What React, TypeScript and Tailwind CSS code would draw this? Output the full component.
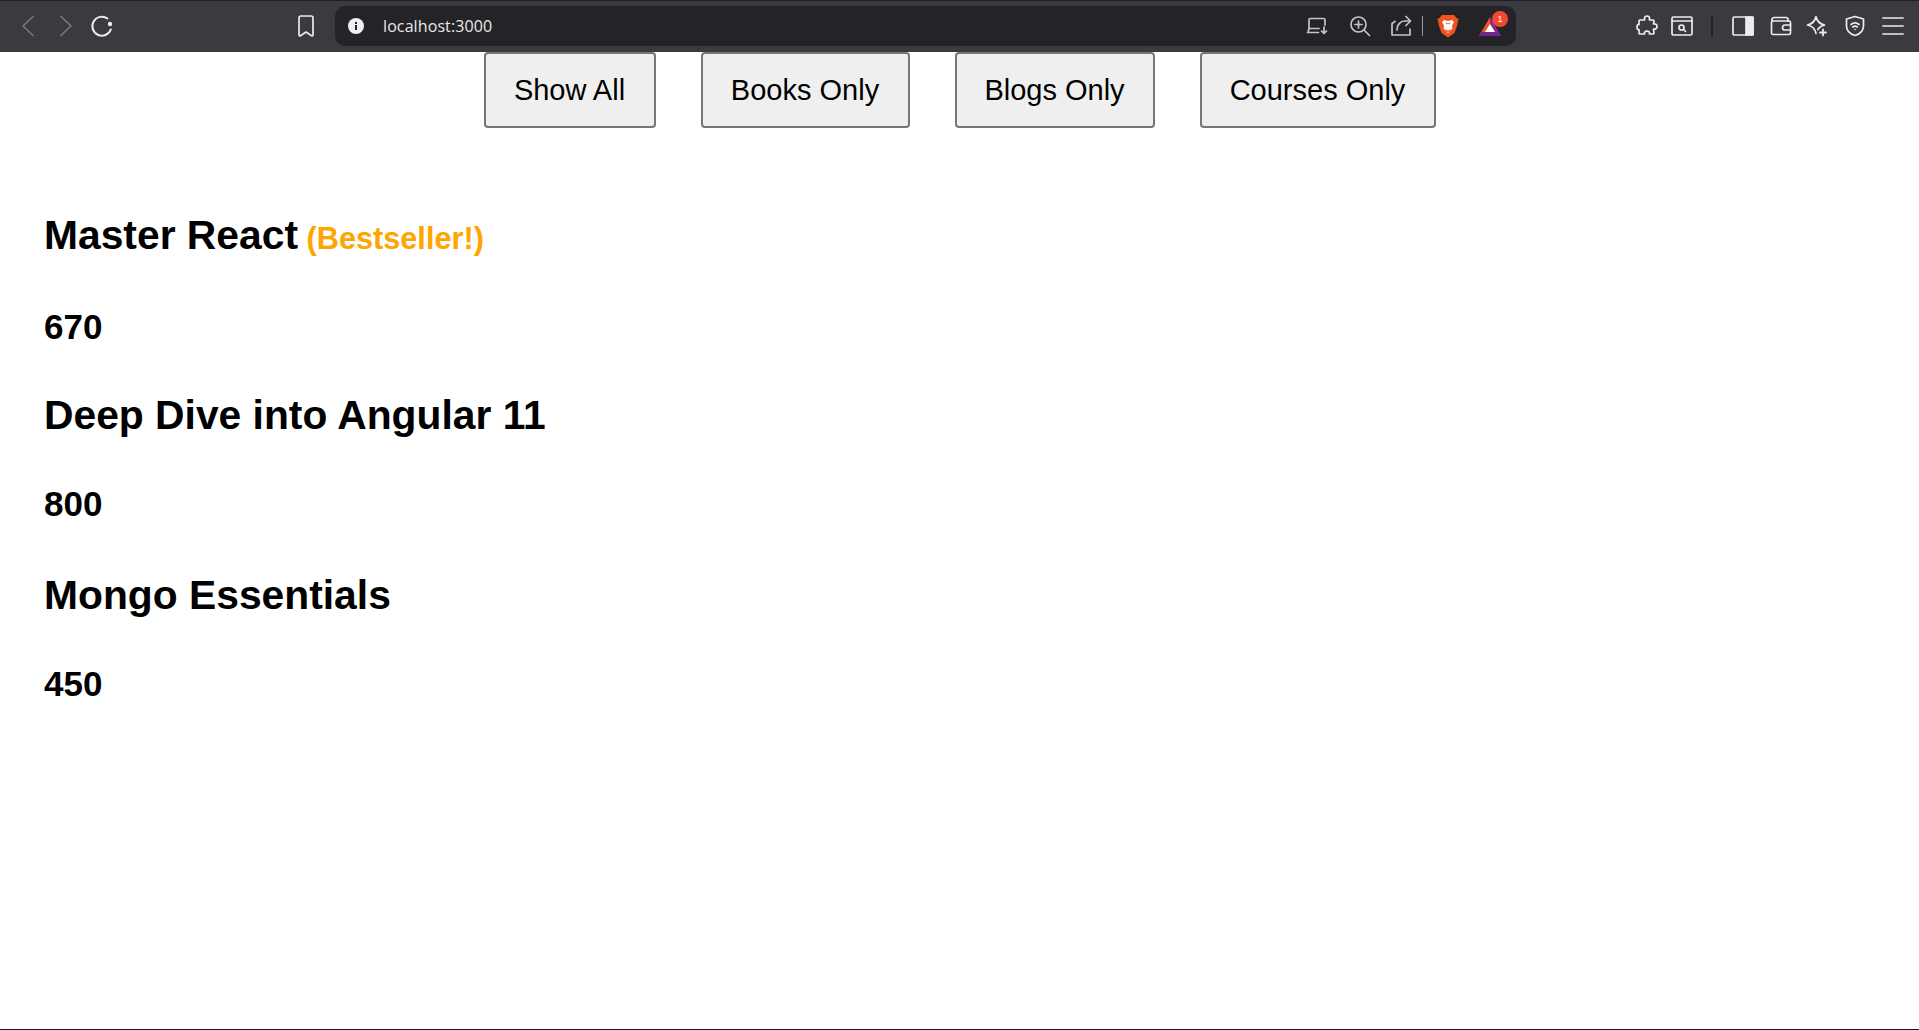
import { ReactNode } from 'react';

const sans = 'font-["Liberation_Sans",Arial,sans-serif]';

function ToolIcon({ children, className = '' }: { children: ReactNode; className?: string }) {
  return (
    <svg className={`w-6 h-6 shrink-0 ${className}`} viewBox="0 0 24 24" fill="none" stroke="currentColor" strokeWidth={1.7} strokeLinecap="round" strokeLinejoin="round">
      {children}
    </svg>
  );
}

function BrowserBar() {
  return (
    <header className="h-[52px] shrink-0 flex items-center pb-px bg-[#3a3a40] border-t border-[#1f1f23] text-[#d4d4d8]">
      {/* nav */}
      <div className="w-[335px] shrink-0 flex items-center pl-[16px]">
        <ToolIcon className="text-[#77777c]"><path d="M17 2.500L7 12l10 9.500" /></ToolIcon>
        <ToolIcon className="ml-[14px] text-[#77777c]"><path d="M7 2.500L17 12 7 21.500" /></ToolIcon>
        <ToolIcon className="ml-[12px] text-[#ececee]">
          <path d="M17.500 4.500A9.500 9.500 0 1 0 20.800 15.500" strokeWidth={2} />
          <circle cx="20" cy="10" r="2.200" fill="currentColor" stroke="none" />
        </ToolIcon>
        <ToolIcon className="ml-[180px] text-[#ececee]">
          <path d="M5 4a2 2 0 0 1 2-2h10a2 2 0 0 1 2 2v17c0 .8-.9 1.200-1.500.7L12 18l-5.500 3.700c-.6.4-1.500 0-1.500-.7z" />
        </ToolIcon>
      </div>

      {/* url bar */}
      <div className="w-[1181px] h-[40px] shrink-0 rounded-[10px] bg-[#242428] flex items-center pl-[12px] pr-[14px]">
        <svg className="w-[18px] h-[18px]" viewBox="0 0 18 18">
          <circle cx="9" cy="9" r="8" fill="#f0f0f2" />
          <rect x="8" y="8" width="2" height="5" fill="#242428" />
          <rect x="8" y="5" width="2" height="2" fill="#242428" />
        </svg>
        <span className="ml-[18px] font-['Open_Sans',sans-serif] text-[16px] tracking-[0.1px] text-[#e8e8ea]">localhost:3000</span>

        <div className="ml-auto flex items-center">
          <ToolIcon className="text-[#c4c4c8]">
            <path d="M4 14V6a1.500 1.500 0 0 1 1.500-1.500h13A1.500 1.500 0 0 1 20 6v5" />
            <path d="M2.500 18.500h11M3 18.500l1-4h10" />
            <path d="M19 13v6M16.500 17l2.500 2.500 2.500-2.500" />
          </ToolIcon>
          <ToolIcon className="ml-[19px] text-[#c4c4c8]">
            <circle cx="10.500" cy="10.500" r="7.500" />
            <path d="M16 16l5.500 5.500M10.500 7v7M7 10.500h7" />
          </ToolIcon>
          <ToolIcon className="ml-[17px] text-[#c4c4c8]">
            <path d="M21 15v6H3V9.500L6 7.500" />
            <path d="M8 16c0-5 3-9 8-9h5" />
            <path d="M17 2.500L21.500 7 17 11.500" />
          </ToolIcon>
          <div className="w-px h-[20px] ml-[9px] bg-[#9a9a9e]" />
          <svg className="w-[22px] h-[24px] ml-[14px]" viewBox="0 0 22 24">
            <path d="M5 1h12l2.500 3 2 1-1.500 7-2.500 7L11 23.500 4.500 19 2 12 .5 5l2-1z" fill="#f1531f" />
            <path d="M7 6l4 1 4-1 2 2-2 3.500.5 3-2.500 2-2 3-2-3-2.500-2 .5-3L5 8z" fill="#fff" />
            <path d="M9 9l1.500 1M13 9l-1.500 1M9 16l2 1.500 2-1.500" stroke="#f1531f" strokeWidth={1.200} fill="none" />
          </svg>
          <div className="relative w-[24px] h-[24px] ml-[19px]">
            <svg className="w-[24px] h-[24px]" viewBox="0 0 24 24">
              <path d="M12 3L1 22h11z" fill="#f0522b" />
              <path d="M12 3l11 19H12z" fill="#8e2b8f" />
              <path d="M1 22h22l-3-4H4z" fill="#6d2a8c" />
              <path d="M12 10l5 8H7z" fill="#fff" />
            </svg>
            <span className={`${sans} absolute -top-[3px] -right-[6px] w-[16px] h-[16px] rounded-full bg-[#f0492f] text-white text-[9px] leading-[16px] text-center`}>1</span>
          </div>
        </div>
      </div>

      {/* extensions */}
      <div className="flex-1 flex items-center pl-[119px] text-[#ececee]">
        <ToolIcon>
          <path d="M9.500 4.500C9.500 3 10.500 2 12 2s2.500 1 2.500 2.500V6H18a1 1 0 0 1 1 1l-.5 3c1.800-.5 3.500.5 3.500 2.500S20.300 15.500 18.500 15L19 19a1 1 0 0 1-1 1h-3.500c.5-1.700-.8-2.800-2.500-2.800s-3 1.100-2.500 2.800H5a1 1 0 0 1-1-1v-3.500C2.500 16 2 15 2 13s1-3 2-2.500V7a1 1 0 0 1 1-1h4.500z" />
        </ToolIcon>
        <ToolIcon className="ml-[11px]">
          <rect x="2" y="3" width="20" height="18" rx="1.500" />
          <path d="M2 7h20" />
          <circle cx="11.500" cy="13.500" r="2.500" />
          <path d="M13.500 15.500l2 2" />
        </ToolIcon>
        <div className="w-[2px] h-[20px] ml-[17px] bg-[#212125]" />
        <ToolIcon className="ml-[18px]">
          <rect x="2" y="3" width="20" height="18" rx="1.500" />
          <path d="M15 3h7v18h-7z" fill="currentColor" />
        </ToolIcon>
        <ToolIcon className="ml-[14px]">
          <path d="M3 7V5.500A2 2 0 0 1 5 3.500h12a2 2 0 0 1 2 2V7" />
          <rect x="2.500" y="7" width="19" height="13.500" rx="1.500" />
          <path d="M21.500 11H16a2.500 2.500 0 0 0 0 5h5.500" />
        </ToolIcon>
        <ToolIcon className="ml-[12px]">
          <path d="M11 2.500c1 5 3.500 7.500 8.500 8.500-3.200.7-5.300 2.200-6.700 4.500M11 2.500C10 7.500 7.500 10 2.500 11c5 1 7.500 3.500 8.500 8.500" />
          <path d="M18 15.500v6M15 18.500h6" strokeWidth={1.800} />
        </ToolIcon>
        <ToolIcon className="ml-[14px]">
          <path d="M12 2.500l8.500 2.500v7c0 4.500-3.500 8-8.500 9.500C7 20 3.500 16.500 3.500 12V5z" />
          <path d="M8 10.500c2.400-2 5.600-2 8 0M9.800 13c1.300-1 3.100-1 4.400 0" />
          <circle cx="12" cy="15.500" r=".8" fill="currentColor" stroke="none" />
        </ToolIcon>
        <ToolIcon className="ml-[14px]">
          <path d="M2 4h20M2 12h20M2 20h20" />
        </ToolIcon>
      </div>
    </header>
  );
}

const filters = [
  { label: 'Show All', width: 'w-[172px]' },
  { label: 'Books Only', width: 'w-[209px]' },
  { label: 'Blogs Only', width: 'w-[200px]' },
  { label: 'Courses Only', width: 'w-[236px]' },
];

const items = [
  { title: 'Master React', price: 670, bestseller: true },
  { title: 'Deep Dive into Angular 11', price: 800 },
  { title: 'Mongo Essentials', price: 450 },
];

export default function App() {
  return (
    <div className={`${sans} h-[1030px] flex flex-col bg-white text-black border-b border-[#1a1a1a] overflow-hidden`}>
      <BrowserBar />

      <div className="h-[76px] shrink-0 flex justify-center gap-[45px]">
        {filters.map(f => (
          <button key={f.label} className={`${f.width} h-[76px] rounded-[4px] border-2 border-[#767676] bg-[#efefef] text-[29px] leading-none`}>
            {f.label}
          </button>
        ))}
      </div>

      <div className="pl-[44px] pt-[84px]">
        {items.map(item => (
          <div key={item.title} className="h-[180px]">
            <h1 className="text-[40.8px] leading-[47px] font-bold">
              {item.title}
              {item.bestseller && <span className="text-[30.7px] text-[#ffa500]"> (Bestseller!)</span>}
            </h1>
            <h2 className="mt-[45px] text-[35px] leading-[40px] font-bold">{item.price}</h2>
          </div>
        ))}
      </div>
    </div>
  );
}
